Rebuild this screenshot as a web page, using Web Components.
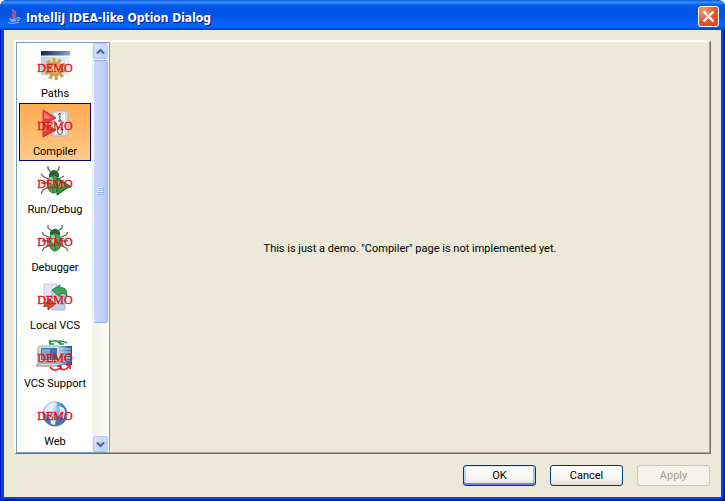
<!DOCTYPE html>
<html lang="en">
<head>
<meta charset="utf-8">
<title>IntelliJ IDEA-like Option Dialog</title>
<style>
html,body{margin:0;height:100%;background:#fff}
body{font:11px/14px Roboto,"Liberation Sans",sans-serif;color:#000}
</style>
</head>
<body>
<option-dialog caption="IntelliJ IDEA-like Option Dialog">
  <page-list slot="pages">
    <page-item label="Paths"><svg viewBox="0 0 40 36" width="40" height="36">
      <defs><linearGradient id="wt"><stop offset="0" stop-color="#0e2246"/><stop offset="1" stop-color="#86a3dc"/></linearGradient><linearGradient id="wb"><stop offset="0" stop-color="#c3cddd"/><stop offset="1" stop-color="#eef1f7"/></linearGradient></defs>
      <path d="M6 4h29v22H6z" fill="url(#wb)"/><path d="M6 2h29v5H6z" fill="url(#wt)"/><path d="M6 7h29" stroke="#fff"/>
      <circle cx="20" cy="20" r="9" fill="none" stroke="#cda04a" stroke-width="4" stroke-dasharray="3 2.65"/><circle cx="20" cy="20" r="6" fill="#efc568" stroke="#cda04a" stroke-width="3"/><circle cx="20" cy="20" r="2.5" fill="#fff3c7"/></svg></page-item>
    <page-item label="Compiler" selected><svg viewBox="0 0 40 36" width="40" height="36">
      <path d="M17 4h16v25H17z" fill="#d8d8d8" stroke="#b4b4b4"/><path d="M20 6h10v21H20z" fill="#f8f8f8"/><path d="M23 8l2-2v8M23 14h4" fill="none" stroke="#444"/><ellipse cx="25" cy="24" rx="2.5" ry="3.500" fill="none" stroke="#555"/>
      <path d="M8 3l13 8-13 6zM8 17l13 6-13 7z" fill="#e8403c" stroke="#c83030"/><path d="M9 5l8 6-8 1zM9 19l8 4-8 1z" fill="#f67670"/></svg></page-item>
    <page-item label="Run/Debug"><svg viewBox="0 0 40 36" width="40" height="36">
      <path d="M13 1v3l3 3M24 1v3l-3 3M13 14L9 12l-3-3M24 14l5-3M13 18H6M14 22l-6 3-2 4" fill="none" stroke="#666" stroke-width="1.3"/><path d="M14 9q5-8 10 0v3H14z" fill="#246733"/><ellipse cx="18.500" cy="19" rx="6" ry="9" fill="#43a653" stroke="#2a6a35"/><path d="M18 10v18" stroke="#2c7d39"/><ellipse cx="16" cy="16" rx="2" ry="4" fill="#a9dfab"/>
      <path d="M22 13l13 8-13 9z" fill="#349a38" stroke="#075611"/><path d="M23 16l8 5-8 1z" fill="#6ad269"/></svg></page-item>
    <page-item label="Debugger"><svg viewBox="0 0 40 36" width="40" height="36">
      <path d="M13 2v3l4 3M27 2v3l-4 3M14 14l-5-2-2-3M26 14l5-2 2-3M14 18H7M26 18h7M15 22l-6 3-2 3M25 22l6 3 2 3" fill="none" stroke="#666" stroke-width="1.3"/><path d="M15 9q5-7 10 0v3H15z" fill="#246733"/><ellipse cx="20" cy="19" rx="6" ry="9" fill="#43a653" stroke="#2a6a35"/><path d="M20 10v18" stroke="#2c7d39"/><ellipse cx="18" cy="16" rx="2" ry="4" fill="#a9dfab"/></svg></page-item>
    <page-item label="Local VCS"><svg viewBox="0 0 40 36" width="40" height="36">
      <path d="M9 3h13v20H9z" fill="#e4e4f2" stroke="#c9c9d9"/><path d="M17 9h13v20H17z" fill="#bdd4e8" stroke="#a3b9ce"/><path d="M17 9l8-5v3q7-2 7 8-3-4-7-2v3z" fill="#3ba85c" stroke="#228544"/><path d="M20 23l-7-5v3q-4 0-4 5 2-1 4-1v4z" fill="#cc5930" stroke="#9c361c"/></svg></page-item>
    <page-item label="VCS Support"><svg viewBox="0 0 40 36" width="40" height="36">
      <defs><linearGradient id="sv"><stop offset="0" stop-color="#a7c8eb"/><stop offset="1" stop-color="#174f96"/></linearGradient></defs>
      <path d="M24 7h13v19H24z" fill="url(#sv)"/><path d="M25 10h11M25 13h11M25 16h11M25 19h11M25 22h11" stroke="#d2e2f5"/><rect x="3" y="7" width="22" height="16" rx="2" fill="#ddd" stroke="#a4a4a4"/><path d="M6 9h16v12H6z" fill="#3c72b8"/><path d="M7 10h8v10H7z" fill="#78a8dc"/><path d="M3 24h21l2 3H1z" fill="#d6d6d6" stroke="#8a8a8a"/>
      <g fill="none" stroke="#159b36" stroke-width="1.6"><path d="M14 4q4-4 10-1M23 4q4-3 9 0"/><path d="M15 1v4h4M25 1v4h4" /></g>
      <g fill="none" stroke="#f01216" stroke-width="1.6"><path d="M15 28q4 6 10 1M25 29q5 4 9-2"/><path d="M22 27h4v4M31 26h4v4"/></g></svg></page-item>
    <page-item label="Web"><svg viewBox="0 0 40 36" width="40" height="36">
      <defs><radialGradient id="gl" cx=".35" cy=".3"><stop offset="0" stop-color="#eef6ff"/><stop offset=".6" stop-color="#8db7e5"/><stop offset="1" stop-color="#4178bd"/></radialGradient></defs>
      <circle cx="20" cy="17" r="12.500" fill="url(#gl)"/><path d="M12 9q5-5 10-3l-2 4-4 2 1 4-5 2-3-4zM24 9l5 2 2 6-3 5-4-4 1-4zM15 20l6 2-1 6-4-1z" fill="#e5effb"/></svg></page-item>
  </page-list>
  <p>This is just a demo. "Compiler" page is not implemented yet.</p>
  <dialog-button slot="actions" kind="default">OK</dialog-button>
  <dialog-button slot="actions">Cancel</dialog-button>
  <dialog-button slot="actions" kind="disabled">Apply</dialog-button>
</option-dialog>
<script>
const define=(name,html,setup)=>customElements.define(name,class extends HTMLElement{
  connectedCallback(){
    if(this.shadowRoot)return;
    this.attachShadow({mode:'open'}).innerHTML=html;
    if(setup)setup(this,this.shadowRoot);
  }
});

define('option-dialog',`<style>
:host{display:flex;flex-direction:column;box-sizing:border-box;height:100vh;min-height:300px;padding:0 4px 4px;border-radius:7px 7px 0 0;background:#0046e0;box-shadow:inset 1px 0 #0019cf,inset -1px -1px #00138c,inset -2px -2px #001ea0}
.main{flex:1;min-height:0;display:flex;flex-direction:column;background:#ece9d8;padding:10px 10px 11px}
.panel{flex:1;min-height:0;display:flex;border:2px solid;border-color:#fff #716f64 #716f64 #fff;border-right-width:1px;border-bottom-width:1px;box-shadow:inset -1px -1px #aca899}
.page{flex:1;display:flex;align-items:center;justify-content:center;padding:2px 8px 0}
::slotted(p){margin:0}
.actions{display:flex;justify-content:flex-end;gap:14px;padding:11px 1px 0}
</style>
<title-bar></title-bar>
<div class="main"><div class="panel"><slot name="pages"></slot><div class="page"><slot></slot></div></div>
<div class="actions"><slot name="actions"></slot></div></div>`,
(host,root)=>root.querySelector('title-bar').setAttribute('caption',host.getAttribute('caption')));

define('title-bar',`<style>
:host{display:flex;align-items:center;gap:4px;height:30px;margin:0 -4px;padding:3px 6px 0 6px;box-sizing:border-box;flex:none;border-radius:7px 7px 0 0;background:linear-gradient(#0958d8 0,#3b90ff 2px,#2b82fb 3px,#0762ee 5px,#0054e3 8px,#0055e6 16px,#0562fb 22px,#0066ff 26px,#0054e0 28px,#0040c8 30px)}
h1{flex:1;margin:0;padding-top:2px;font:bold 12px/16px "DejaVu Sans Condensed","DejaVu Sans",sans-serif;color:#fff;text-shadow:1px 1px #0a1883}
button{display:flex;padding:0;border:1px solid #fff;border-radius:3px;width:21px;height:21px;align-items:center;justify-content:center;background:radial-gradient(circle at 25% 20%,#f0987e,#e35a34 50%,#d0441a)}
</style>
<svg width="16" height="16" viewBox="0 0 16 16" fill="none" aria-hidden="true"><path d="M8 9C4 6 9 5 7 1q5 3 1 5 2 1 0 3M10 4Q8 6 10 8" stroke="#e0506a" stroke-width="1.300"/><path d="M3 9.500q4 2 8 0M4 11.500q3 1 6 0M2 13.500q5 2 11-.5M11 9q4-1 2 2l-2 1" stroke="#8fb0ea" stroke-width="1.300"/></svg>
<h1></h1>
<button type="button" aria-label="Close"><svg width="13" height="13" viewBox="0 0 13 13"><path d="M1.500 1.500l10 10M11.500 1.500l-10 10" stroke="#fff" stroke-width="2.200"/></svg></button>`,
(host,root)=>root.querySelector('h1').textContent=host.getAttribute('caption'));

define('page-list',`<style>
:host{display:flex;box-sizing:border-box;border:1px solid #7f9db9;background:#fff;flex:none;min-height:0;overflow:hidden}
.items{width:72px;padding:2px 1px 2px 2px;overflow:hidden}
</style><nav class="items" aria-label="Option pages"><slot></slot></nav><scroll-bar></scroll-bar>`);

define('page-item',`<style>
:host{display:block}
button{display:flex;flex-direction:column;align-items:center;width:100%;height:58px;margin:0;padding:3px 0 0;box-sizing:border-box;border:1px solid transparent;background:none;font:inherit;color:#000;white-space:nowrap}
:host([selected]) button{border-color:#000080;background:linear-gradient(#ffab52,#ffcb85)}
.icon{position:relative;height:36px;width:40px}
.label{padding-top:2px}
.mark{position:absolute;inset:10px 0 0;text-align:center;font:12px/18px "Liberation Serif",serif;color:#d91820;-webkit-text-stroke:.4px #d91820}
</style><button type="button"><span class="icon"><slot></slot><span class="mark">DEMO</span></span><span class="label"></span></button>`,
(host,root)=>{
  root.querySelector('.label').textContent=host.getAttribute('label');
  if(host.hasAttribute('selected'))root.querySelector('button').setAttribute('aria-current','page');
});

define('scroll-bar',`<style>
:host{display:flex;flex-direction:column;width:17px;box-sizing:border-box;padding:0 1px;gap:1px;background:linear-gradient(90deg,#f0efe8,#fefefb)}
button{display:flex;align-items:center;justify-content:center;width:100%;height:16px;padding:0;border:1px solid #b4c8f6;border-radius:2px;background:linear-gradient(135deg,#dbe5ff,#b8cbfa);flex:none}
.track{flex:1;display:flex;min-height:0}
.thumb{flex:1;height:70%;box-sizing:border-box;display:flex;align-items:center;justify-content:center;border:1px solid #98b1e4;border-left-color:#fff;border-radius:2px;background:linear-gradient(90deg,#cad8fd,#c0d0fb 65%,#b5c9f7)}
</style>
<button type="button" aria-label="Scroll up"><svg width="9" height="7" viewBox="0 0 9 7"><path d="M1 5.500l3.500-3.500L8 5.500" fill="none" stroke="#4d6185" stroke-width="2"/></svg></button>
<div class="track"><div class="thumb"><svg width="7" height="8" viewBox="0 0 7 8"><path d="M0 .5h6M0 2.500h6M0 4.500h6M0 6.500h6" stroke="#eef4fe"/><path d="M1 1.500h6M1 3.500h6M1 5.500h6M1 7.500h6" stroke="#8cb0f8"/></svg></div></div>
<button type="button" aria-label="Scroll down"><svg width="9" height="7" viewBox="0 0 9 7"><path d="M1 1.500l3.500 3.500L8 1.500" fill="none" stroke="#4d6185" stroke-width="2"/></svg></button>`);

define('dialog-button',`<style>
:host{display:block}
button{width:73px;height:21px;padding:0;box-sizing:border-box;border:1px solid #003c74;border-radius:3px;background:linear-gradient(#fff,#f5f4ef 70%,#e0dccf);font:inherit;color:#000;white-space:nowrap}
:host([kind=default]) button{box-shadow:inset 0 1px #cee7ff,inset 0 -2px #6982ee,inset 2px 0 #bcd4f6,inset -2px 0 #a5bef2}
button:disabled{border-color:#c9c7ba;background:#f5f4ea;color:#a1a192}
</style><button type="button"><slot></slot></button>`,
(host,root)=>root.querySelector('button').disabled=host.getAttribute('kind')==='disabled');
</script>
</body>
</html>
